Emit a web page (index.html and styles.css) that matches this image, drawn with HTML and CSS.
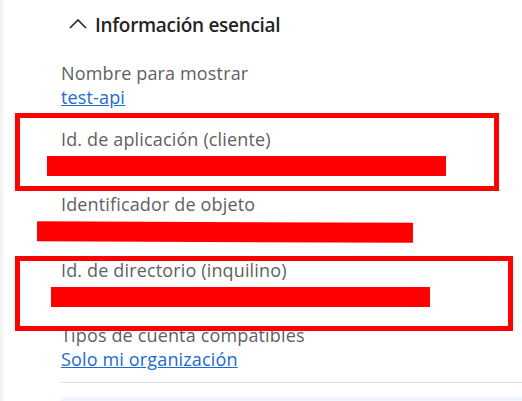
FILE: index.html
```html
<!DOCTYPE html>
<html lang="es">
<head>
    <meta charset="UTF-8">
    <meta name="viewport" content="width=device-width, initial-scale=1.0">
    <title>test-api - Información general</title>
    <link rel="stylesheet" href="styles.css">
</head>
<body>

    <div class="panel">
        <div class="section-head">
            <svg class="chevron" width="18" height="10" viewBox="0 0 18 10">
                <path d="M1 9 L9 1 L17 9" fill="none" stroke="#242424" stroke-width="1.6"/>
            </svg>
            <h2>Información esencial</h2>
        </div>

        <dl class="fields">
            <div class="field">
                <dt>Nombre para mostrar</dt>
                <dd><a href="#">test-api</a></dd>
            </div>
            <div class="field">
                <dt>Id. de aplicación (cliente)</dt>
                <dd></dd>
            </div>
            <div class="field">
                <dt>Identificador de objeto</dt>
                <dd></dd>
            </div>
            <div class="field">
                <dt>Id. de directorio (inquilino)</dt>
                <dd></dd>
            </div>
            <div class="field">
                <dt>Tipos de cuenta compatibles</dt>
                <dd><a href="#">Solo mi organización</a></dd>
            </div>
        </dl>

        <hr class="divider">
        <div class="info-box"></div>

        <!-- annotations drawn over the screenshot -->
        <span class="redact redact-app"></span>
        <span class="redact redact-obj"></span>
        <span class="redact redact-tenant"></span>
        <span class="mark mark-app"></span>
        <span class="mark mark-tenant"></span>
    </div>

</body>
</html>
```

FILE: styles.css
```css
*, *::after, *::before{
    margin: 0;
    padding: 0;
    box-sizing: border-box;
}
:root {
    --text: #242424;
    --label: #5f5f5f;
    --link: #1a6bd2;
    --mark: #ff0000;
}

body{
    background-color: #fff;
    font-family: "Open Sans", "Noto Sans", Arial, sans-serif;
    height: 100vh;
    overflow: hidden;
}
.panel{
    position: relative;
    height: 100%;
    overflow: hidden;
    border-left: 3px solid #f3f3f3;
    padding-top: 11px;
}

.section-head{
    display: flex;
    align-items: center;
    gap: 8px;
    padding-left: 66px;
    height: 28px;
    margin-bottom: 22px;
}
.section-head h2{
    font-size: 19px;
    font-weight: 600;
    color: var(--text);
    line-height: 28px;
    letter-spacing: -0.3px;
}
.chevron{
    margin-top: -2px;
}

.fields{
    padding-left: 58px;
}
.field{
    margin-bottom: 17.5px;
    line-height: 24px;
    font-size: 18px;
    letter-spacing: 0.15px;
}
.field dt{
    color: var(--label);
    height: 24px;
}
.field dd{
    height: 24px;
}
.field a{
    color: var(--link);
    text-decoration: underline;
}
.field:last-child{
    margin-bottom: 11px;
}

.divider{
    border: none;
    border-top: 1px solid #dcdcdc;
    margin-left: 58px;
}
.info-box{
    margin: 14px 0 0 58px;
    height: 4px;
    background-color: #f0f6ff;
}

.redact{
    position: absolute;
    height: 20px;
    background-color: var(--mark);
}
.redact-app{
    left: 44px;
    top: 156px;
    width: 399px;
}
.redact-obj{
    left: 34px;
    top: 222px;
    width: 376px;
    transform: rotate(0.25deg);
}
.redact-tenant{
    left: 48px;
    top: 287px;
    width: 379px;
}
.mark{
    position: absolute;
    border: 5px solid var(--mark);
}
.mark-app{
    left: 12px;
    top: 113px;
    width: 484px;
    height: 78px;
}
.mark-tenant{
    left: 12px;
    top: 256px;
    width: 498px;
    height: 75px;
}
```
